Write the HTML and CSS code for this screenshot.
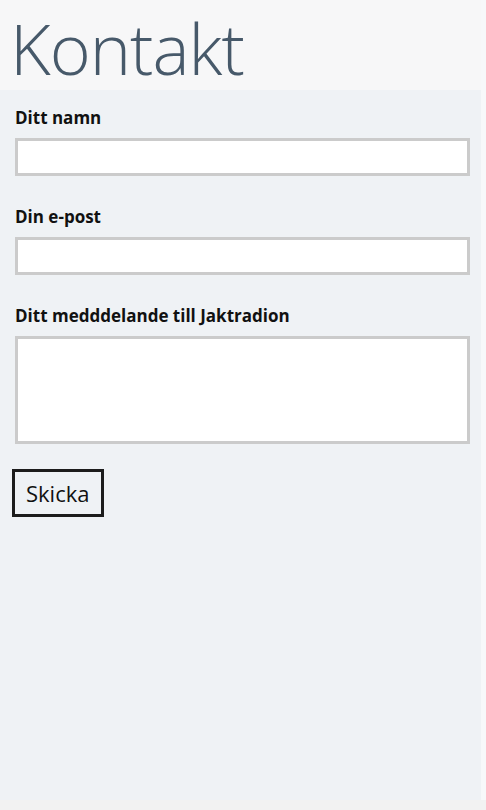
FILE: index.html
```html
<!DOCTYPE html>
<html lang="sv">
<head>
    <meta charset="UTF-8">
    <meta name="viewport" content="width=device-width, initial-scale=1.0">
    <title>Kontakt</title>
    <link rel="stylesheet" href="styles.css">
</head>
<body>

<div class="page">
    <div class="page-header">
        <h1>Kontakt</h1>
    </div>

    <form class="contact-form" onsubmit="return false">
        <label for="name">Ditt namn</label>
        <input type="text" id="name">

        <label for="email">Din e-post</label>
        <input type="email" id="email">

        <label for="message">Ditt medddelande till Jaktradion</label>
        <textarea id="message"></textarea>

        <button type="submit">Skicka</button>
    </form>
</div>

</body>
</html>
```

FILE: styles.css
```css
html, body {
    height: 100%;
}

body {
    margin: 0;
    font-family: "Open Sans", "Noto Sans", sans-serif;
    background-color: #f2f2f2;
    color: #111;
}

.page {
    display: flex;
    flex-direction: column;
    height: 800px;
    margin-right: 5px;
    background-color: #eff2f5;
    box-shadow: 5px 0 0 #f7f8fa;
}

.page-header {
    flex: none;
    height: 90px;
    min-height: 0;
    background-color: #f7f7f8;
}

.page-header h1 {
    margin: 0;
    padding-left: 10px;
    font-size: 70px;
    font-weight: 300;
    line-height: normal;
    color: #47596a;
    letter-spacing: -1px;
}

.contact-form {
    display: flex;
    flex-direction: column;
    align-items: flex-start;
    padding: 17px 11px 0 15px;
}

label {
    font-size: 17px;
    font-weight: 700;
    line-height: 22px;
    margin-bottom: 9px;
}

input,
textarea {
    box-sizing: border-box;
    width: 100%;
    height: 38px;
    margin: 0 0 30px;
    border: 3px solid #cbcbcb;
    background: #fff;
    font: inherit;
}

textarea {
    height: 108px;
    resize: none;
    margin-bottom: 25px;
}

button {
    margin-left: -3px;
    padding: 6px 11px;
    border: 3px solid #1c1c1c;
    background: transparent;
    font-family: inherit;
    font-size: 22px;
    line-height: 30px;
    color: #111;
    cursor: pointer;
}
```
